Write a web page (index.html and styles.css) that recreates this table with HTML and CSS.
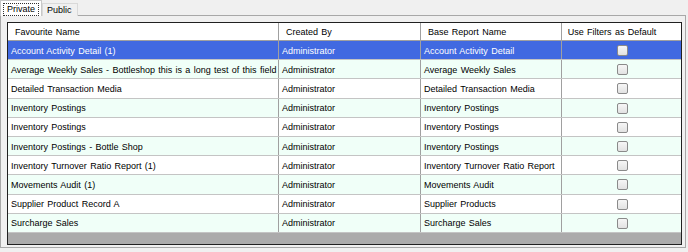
FILE: index.html
```html
<!DOCTYPE html>
<html>
<head>
<meta charset="utf-8">
<link rel="stylesheet" href="styles.css">
</head>
<body>
<div class="tabctl">
  <div class="tabstrip">
    <div class="tab tab-active"><span class="focus">Private</span></div>
    <div class="tab">Public</div>
  </div>
  <div class="page">
    <div class="grid">
      <div class="row head">
        <div class="cell c1 hc">Favourite Name</div>
        <div class="cell c2 hc">Created By</div>
        <div class="cell c3 hc">Base Report Name</div>
        <div class="cell c4 hc center hcc">Use Filters as Default</div>
      </div>
      <div class="row sel">
        <div class="cell c1">Account Activity Detail (1)</div>
        <div class="cell c2">Administrator</div>
        <div class="cell c3">Account Activity Detail</div>
        <div class="cell c4 center"><span class="cb"></span></div>
      </div>
      <div class="row alt">
        <div class="cell c1">Average Weekly Sales - Bottleshop this is a long test of this field</div>
        <div class="cell c2">Administrator</div>
        <div class="cell c3">Average Weekly Sales</div>
        <div class="cell c4 center"><span class="cb"></span></div>
      </div>
      <div class="row">
        <div class="cell c1">Detailed Transaction Media</div>
        <div class="cell c2">Administrator</div>
        <div class="cell c3">Detailed Transaction Media</div>
        <div class="cell c4 center"><span class="cb"></span></div>
      </div>
      <div class="row alt">
        <div class="cell c1">Inventory Postings</div>
        <div class="cell c2">Administrator</div>
        <div class="cell c3">Inventory Postings</div>
        <div class="cell c4 center"><span class="cb"></span></div>
      </div>
      <div class="row">
        <div class="cell c1">Inventory Postings</div>
        <div class="cell c2">Administrator</div>
        <div class="cell c3">Inventory Postings</div>
        <div class="cell c4 center"><span class="cb"></span></div>
      </div>
      <div class="row alt">
        <div class="cell c1">Inventory Postings - Bottle Shop</div>
        <div class="cell c2">Administrator</div>
        <div class="cell c3">Inventory Postings</div>
        <div class="cell c4 center"><span class="cb"></span></div>
      </div>
      <div class="row">
        <div class="cell c1">Inventory Turnover Ratio Report (1)</div>
        <div class="cell c2">Administrator</div>
        <div class="cell c3">Inventory Turnover Ratio Report</div>
        <div class="cell c4 center"><span class="cb"></span></div>
      </div>
      <div class="row alt">
        <div class="cell c1">Movements Audit (1)</div>
        <div class="cell c2">Administrator</div>
        <div class="cell c3">Movements Audit</div>
        <div class="cell c4 center"><span class="cb"></span></div>
      </div>
      <div class="row">
        <div class="cell c1">Supplier Product Record A</div>
        <div class="cell c2">Administrator</div>
        <div class="cell c3">Supplier Products</div>
        <div class="cell c4 center"><span class="cb"></span></div>
      </div>
      <div class="row alt">
        <div class="cell c1">Surcharge Sales</div>
        <div class="cell c2">Administrator</div>
        <div class="cell c3">Surcharge Sales</div>
        <div class="cell c4 center"><span class="cb"></span></div>
      </div>
      <div class="empty"></div>
    </div>
  </div>
</div>
</body>
</html>
```

FILE: styles.css
```css
html, body {
  margin: 0;
  padding: 0;
  background: #f0f0f0;
}
body {
  width: 688px;
  height: 252px;
  overflow: hidden;
  font-family: "Liberation Sans", Arial, sans-serif;
  font-size: 9px;
  word-spacing: 0.8px;
  color: #000;
}
.tabctl {
  width: 686px;
}
.tabstrip {
  display: flex;
  align-items: flex-end;
  height: 16px;
  position: relative;
  z-index: 1;
}
.tab {
  box-sizing: border-box;
  height: 13px;
  padding: 0 5px 0 4px;
  line-height: 12px;
  background: #f0f0f0;
  border: 1px solid #d9d9d9;
  border-bottom: none;
  margin-left: 0;
}
.tab-active {
  height: 16px;
  padding: 2px 2px 0 2px;
  background: #ffffff;
  border-color: #c8c8c8;
  line-height: 12px;
}
.focus {
  display: inline-block;
  padding: 0 3px;
  border: 1px dotted #303030;
  line-height: 11px;
}
.page {
  box-sizing: border-box;
  height: 233px;
  margin-top: -1px;
  border: 1px solid #a8a8a8;
  background: #f0f0f0;
  padding: 6px 3px 3px 6px;
}
.grid {
  box-sizing: border-box;
  height: 223px;
  border: 1px solid #202020;
  background: #ababab;
  display: flex;
  flex-direction: column;
}
.row {
  display: flex;
  box-sizing: border-box;
  height: 19.2px;
  background: #ffffff;
  border-bottom: 1px solid #c4c4c4;
  flex: none;
}
.row.alt {
  background: #f0fff8;
}
.row.sel {
  background: #4169e1;
  color: #ffffff;
}
.row.head {
  height: 18px;
  background: #ffffff;
  border-bottom: 1px solid #a0a0a0;
}
.cell {
  box-sizing: border-box;
  display: flex;
  align-items: center;
  padding-left: 3px;
  padding-top: 1px;
  white-space: nowrap;
  overflow: hidden;
  border-right: 1px solid #a0a0a0;
}
.hc {
  padding-left: 7px;
}
.c1 { width: 271px; }
.c2 { width: 142px; }
.c3 { width: 141px; }
.c4 { width: 119px; border-right: none; }
.center {
  justify-content: center;
  padding-left: 0;
}
.hcc {
  padding-left: 0;
  padding-right: 19px;
}
.cb {
  box-sizing: border-box;
  width: 11px;
  height: 11px;
  border: 1px solid #8a8a8a;
  border-radius: 2px;
  background: linear-gradient(#f6f6f6, #e2e2e2);
  margin-left: 1px;
}
.empty {
  flex: 1;
  background: #ababab;
}
```
